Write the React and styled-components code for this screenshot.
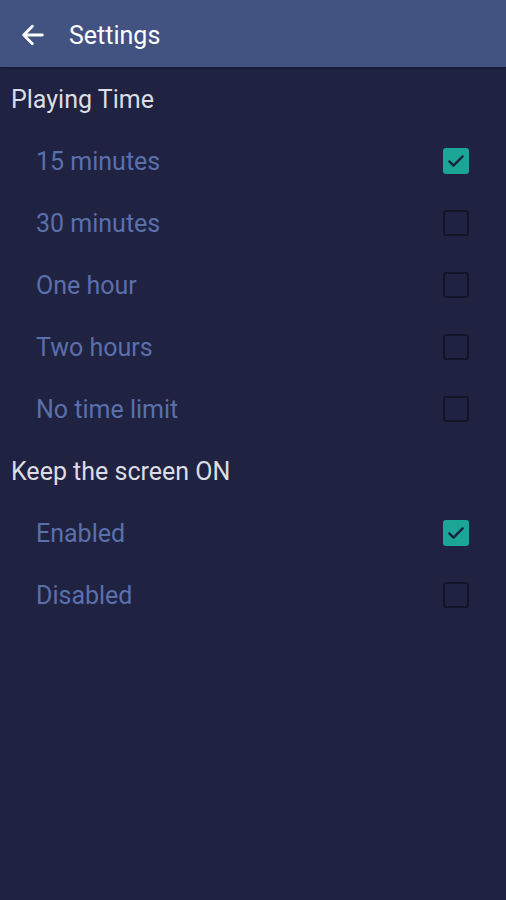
import React, { useState } from 'react';
import styled, { createGlobalStyle } from 'styled-components';

const GlobalStyle = createGlobalStyle`
    html, body {
        margin: 0;
        padding: 0;
        background: #1f2240;
    }
    body {
        font-family: Roboto, "Noto Sans", sans-serif;
    }
`

const Screen = styled.div`
    width: 506px;
    height: 900px;
    background: #1f2240;
    display: flex;
    flex-direction: column;
`

const Toolbar = styled.div`
    height: 67px;
    box-sizing: border-box;
    padding: 3px 0 0 19px;
    background: #425281;
    display: flex;
    align-items: center;
    gap: 22px;
    box-shadow: 0 1px 2px rgba(0, 0, 0, 0.35);
`

const BackButton = styled.button`
    background: none;
    border: none;
    padding: 0;
    display: flex;
    align-items: center;
    cursor: pointer;
`

const Title = styled.h1`
    margin: 0;
    font-size: 25px;
    font-weight: 400;
    color: #ffffff;
`

const SectionTitle = styled.div`
    height: 62px;
    box-sizing: border-box;
    padding: 2px 0 0 11px;
    display: flex;
    align-items: center;
    font-size: 25px;
    color: #dcdde4;
`

const Row = styled.label`
    height: 62px;
    box-sizing: border-box;
    padding: 2px 37px 0 36px;
    display: flex;
    align-items: center;
    justify-content: space-between;
    font-size: 25px;
    color: #5a70ad;
    cursor: pointer;
`

const Box = styled.span`
    width: 26px;
    height: 26px;
    border-radius: 3px;
    box-sizing: border-box;
    display: flex;
    align-items: center;
    justify-content: center;
    background: ${p => (p.checked ? '#1ba594' : 'transparent')};
    border: ${p => (p.checked ? 'none' : '2px solid #121527')};
`

const Check = () => (
    <svg width="20" height="20" viewBox="0 0 24 24" fill="none">
        <path d="M4 12.5l5 5L20 6.5" stroke="#1b2040" strokeWidth="2.8" strokeLinecap="round" strokeLinejoin="round" />
    </svg>
)

const Arrow = () => (
    <svg width="28" height="28" viewBox="0 0 24 24" fill="none">
        <path d="M20 12H4.5M11.5 4.5L4 12l7.5 7.5" stroke="#ffffff" strokeWidth="2.4" strokeLinecap="round" strokeLinejoin="round" />
    </svg>
)

const timeOptions = ['15 minutes', '30 minutes', 'One hour', 'Two hours', 'No time limit']
const screenOptions = ['Enabled', 'Disabled']

const App = () => {
    const [time, setTime] = useState('15 minutes')
    const [screenOn, setScreenOn] = useState('Enabled')

    return (
        <Screen>
            <GlobalStyle />
            <Toolbar>
                <BackButton aria-label="Back"><Arrow /></BackButton>
                <Title>Settings</Title>
            </Toolbar>
            <SectionTitle>Playing Time</SectionTitle>
            {timeOptions.map(opt => (
                <Row key={opt} onClick={() => setTime(opt)}>
                    {opt}
                    <Box checked={time === opt}>{time === opt && <Check />}</Box>
                </Row>
            ))}
            <SectionTitle>Keep the screen ON</SectionTitle>
            {screenOptions.map(opt => (
                <Row key={opt} onClick={() => setScreenOn(opt)}>
                    {opt}
                    <Box checked={screenOn === opt}>{screenOn === opt && <Check />}</Box>
                </Row>
            ))}
        </Screen>
    )
}

export default App;
